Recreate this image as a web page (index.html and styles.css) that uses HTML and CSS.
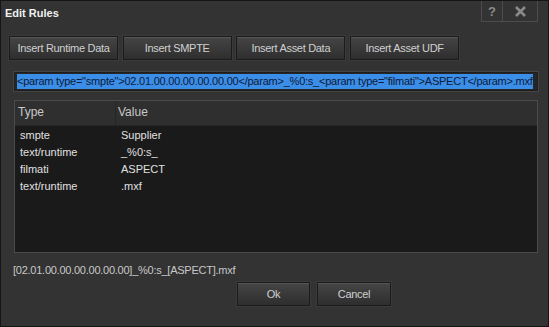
FILE: index.html
```html
<!DOCTYPE html>
<html lang="en">
  <head>
    <meta charset="UTF-8" />
    <title>Edit Rules</title>
    <link rel="stylesheet" href="styles.css">
  </head>

  <body>
    <div class="dialog">
      <!-- 标题栏 -->
      <div class="title-bar">
        <span class="title">Edit Rules</span>
        <div class="title-btns">
          <a href="JavaScript:;" class="help">?</a>
          <a href="JavaScript:;" class="close">
            <svg width="13" height="11" viewBox="0 0 13 11">
              <path d="M2 1 L11 10 M11 1 L2 10" stroke="#8a8a8a" stroke-width="2.6" fill="none" />
            </svg>
          </a>
        </div>
      </div>
      <!-- 插入按钮 -->
      <div class="insert-bar">
        <a href="JavaScript:;" class="btn">Insert Runtime Data</a>
        <a href="JavaScript:;" class="btn">Insert SMPTE</a>
        <a href="JavaScript:;" class="btn">Insert Asset Data</a>
        <a href="JavaScript:;" class="btn">Insert Asset UDF</a>
      </div>
      <!-- 规则输入框 -->
      <div class="rule-input">
        <span class="selected">&lt;param type="smpte"&gt;02.01.00.00.00.00.00.00&lt;/param&gt;_%0:s_&lt;param type="filmati"&gt;ASPECT&lt;/param&gt;.mxf</span>
      </div>
      <!-- 表格 -->
      <div class="table">
        <div class="table-head">
          <div class="col-type">Type</div>
          <div class="col-value">Value</div>
        </div>
        <div class="table-body">
          <div class="row"><span>smpte</span><span>Supplier</span></div>
          <div class="row"><span>text/runtime</span><span>_%0:s_</span></div>
          <div class="row"><span>filmati</span><span>ASPECT</span></div>
          <div class="row"><span>text/runtime</span><span>.mxf</span></div>
        </div>
      </div>
      <!-- 结果 -->
      <div class="result">[02.01.00.00.00.00.00.00]_%0:s_[ASPECT].mxf</div>
      <div class="footer">
        <a href="JavaScript:;" class="btn btn-small">Ok</a>
        <a href="JavaScript:;" class="btn btn-small">Cancel</a>
      </div>
    </div>
  </body>
</html>
```

FILE: styles.css
```css
* {
  margin: 0;
  padding: 0;
  box-sizing: border-box;
}

body {
  background-color: #111;
  font-family: "Liberation Sans", Arial, sans-serif;
  font-size: 11px;
  color: #d2d2d2;
}

a {
  text-decoration: none;
  color: inherit;
}

.dialog {
  width: 549px;
  height: 327px;
  background-color: #333;
  border: 1px solid #151515;
  display: flex;
  flex-direction: column;
}

/* 标题栏 */
.title-bar {
  height: 21px;
  display: flex;
  justify-content: space-between;
  align-items: flex-start;
  padding-right: 10px;
}
.title {
  font-size: 11px;
  font-weight: bold;
  color: #f0f0f0;
  padding: 6px 0 0 4px;
}
.title-btns {
  display: flex;
  height: 21px;
}
.title-btns a {
  display: flex;
  align-items: center;
  justify-content: center;
  border: 1px solid #4c4c4c;
  border-top: none;
  color: #8a8a8a;
  font-weight: bold;
  font-size: 13px;
}
.help {
  width: 22px;
}
.close {
  width: 35px;
  border-left: none !important;
}

/* 按钮 */
.insert-bar {
  display: flex;
  gap: 4.7px;
  padding: 14px 0 0 8px;
}
.btn {
  width: 109px;
  height: 24px;
  display: flex;
  align-items: center;
  justify-content: center;
  font-size: 11px;
  letter-spacing: -0.3px;
  color: #d0d0d0;
  border: 1px solid #1b1b1b;
  background: linear-gradient(#454545, #2e2e2e);
  box-shadow: inset 0 1px 0 #555, 0 0 0 1px #3a3a3a;
}
.btn:hover {
  background: linear-gradient(#505050, #353535);
}

/* 输入框 */
.rule-input {
  margin: 12px 10px 0 13px;
  height: 19px;
  border: 1px solid #1e1e1e;
  box-shadow: 0 0 0 1px #444;
  background-color: #262626;
  padding: 1px 0 0 2px;
  overflow: hidden;
  white-space: nowrap;
}
.selected {
  display: inline-block;
  height: 15px;
  line-height: 15px;
  background-color: #3b8ee8;
  color: #0e1a38;
  font-size: 11px;
  letter-spacing: -0.23px;
}

/* 表格 */
.table {
  margin: 9px 10px 0 13px;
  height: 153px;
  border: 1px solid #4a4a4a;
  background-color: #1a1a1a;
  display: flex;
  flex-direction: column;
}
.table-head {
  height: 25px;
  display: flex;
  background-color: #2f2f2f;
  border-bottom: 1px solid #262626;
  font-size: 12px;
  color: #c8c8c8;
}
.col-type {
  width: 101px;
  padding: 4px 0 0 3px;
  border-right: 1px solid #262626;
}
.col-value {
  padding: 4px 0 0 2px;
}
.table-body {
  padding-top: 1px;
}
.row {
  display: flex;
  height: 17px;
  line-height: 17px;
  font-size: 11px;
  color: #e0e0e0;
}
.row span:first-child {
  width: 101px;
  padding-left: 5px;
}
.row span:last-child {
  padding-left: 5px;
}

/* 结果 */
.result {
  padding: 11px 0 0 12px;
  font-size: 11px;
  color: #c8c8c8;
  letter-spacing: -0.25px;
}
.footer {
  display: flex;
  gap: 7px;
  padding: 6px 0 0 236px;
}
.btn-small {
  width: 73px;
}
.btn-small:last-child {
  width: 74px;
}
```
